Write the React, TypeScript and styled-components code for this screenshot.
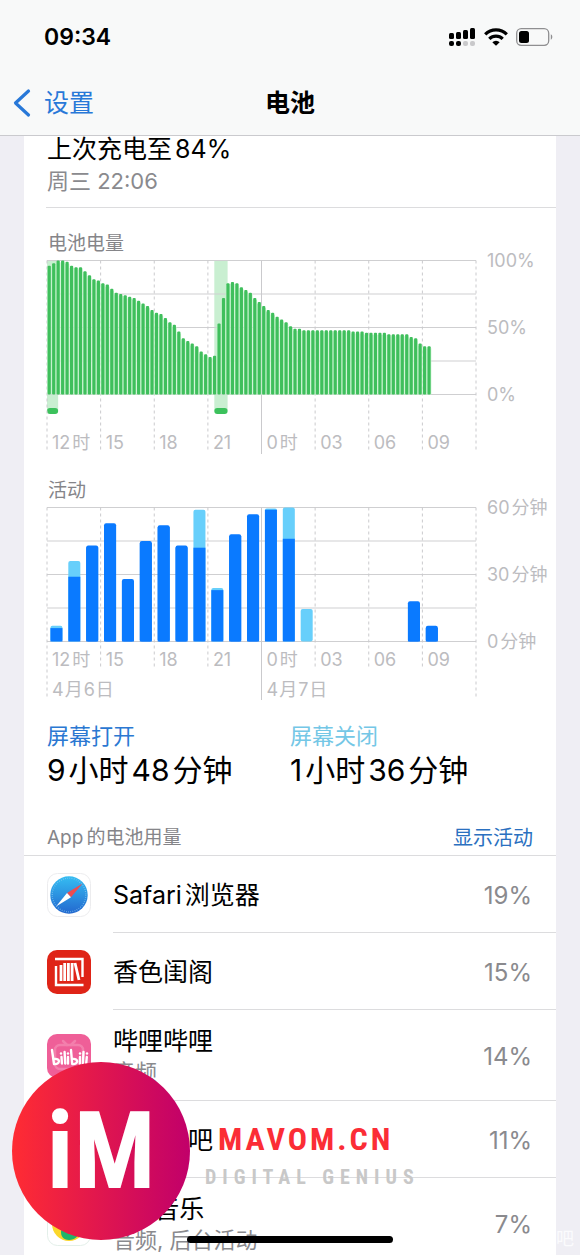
import React from 'react';
import styled, { createGlobalStyle } from 'styled-components';

const latin = `Inter, "Noto Sans CJK SC", sans-serif`;
const brandFace = `"Roboto Condensed", "Noto Sans CJK SC", sans-serif`;

const GlobalStyle = createGlobalStyle`
  * { box-sizing: border-box; }
  body { margin: 0; background: #efeef4; font-family: ${latin}; color: #000; }
  h1, h2, p, ul, dl, dt, dd { margin: 0; padding: 0; font-weight: 400; }
  ul { list-style: none; }
`;

const Screen = styled.div`
  position: relative;
  display: flex;
  flex-direction: column;
  height: 100vh;
  overflow: hidden;
`;

const Header = styled.header`
  background: #f8f9f9;
  border-bottom: 1px solid #cacace;
  flex: none;
`;

const StatusBar = styled.div`
  display: flex;
  align-items: center;
  justify-content: space-between;
  height: 74px;
  padding: 0 27px 0 44px;
`;

const Clock = styled.time`
  font-size: 23px;
  font-weight: 600;
`;

const StatusIcons = styled.div`
  display: flex;
  align-items: center;
  gap: 8px;
`;

const NavBar = styled.nav`
  display: grid;
  grid-template-columns: 1fr auto 1fr;
  align-items: center;
  height: 61px;
  padding: 0 12px 4px;
`;

const BackLink = styled.a`
  display: flex;
  align-items: center;
  gap: 12px;
  color: #2878d8;
  font-size: 25px;
  line-height: 36px;
  text-decoration: none;
`;

const Title = styled.h1`
  font-size: 25px;
  font-weight: 700;
  line-height: 36px;
`;

const Scroller = styled.main`
  flex: 1;
  min-height: 0;
  overflow-y: auto;
  scrollbar-width: none;
  padding: 0 24px;
`;

const Card = styled.div`
  background: #fff;
`;

const LastCharge = styled.section`
  margin-left: 22px;
  padding: 0 0 13px 1px;
  border-bottom: 1px solid #dcdcde;
`;

const ChargeLevel = styled.p`
  font-size: 25px;
  line-height: 26px;
  margin-bottom: 6px;
`;

const ChargeTime = styled.p`
  font-size: 22px;
  line-height: 26px;
  color: #8a8a8e;
`;

const ChartSection = styled.section`
  padding: 24px 80px 0 23px;
`;

const ChartTitle = styled.h2`
  padding-left: 1px;
  font-size: 19px;
  line-height: 24px;
  color: #858589;
`;

const Plot = styled.svg`
  display: block;
  width: 100%;
  overflow: visible;
  font-size: 18px;
  fill: #bcbcc0;
`;

const Totals = styled.dl`
  display: grid;
  grid-template-columns: 1fr 1fr;
  padding: 23px 23px 0;
`;

const TotalLabel = styled.dt<{ $color: string }>`
  font-size: 22px;
  line-height: 26px;
  color: ${(p) => p.$color};
`;

const TotalValue = styled.dd`
  font-size: 30px;
  line-height: 42px;
  white-space: nowrap;
`;

const UsageHeader = styled.div`
  display: flex;
  justify-content: space-between;
  align-items: center;
  padding: 34px 23px 4px;
  border-bottom: 1px solid #dcdcde;
`;

const UsageTitle = styled.h2`
  font-size: 19px;
  line-height: 26px;
  color: #858589;
`;

const ToggleButton = styled.button`
  border: 0;
  padding: 0;
  background: none;
  font: inherit;
  font-size: 20px;
  line-height: 26px;
  color: #2a70c0;
`;

const AppRow = styled.li<{ $tall?: boolean }>`
  display: flex;
  gap: 22px;
  min-height: ${(p) => (p.$tall ? 91 : 77)}px;
  padding-left: 23px;
`;

const AppIcon = styled.svg`
  flex: none;
  align-self: center;
  width: 44px;
  height: 44px;
`;

const AppBody = styled.div`
  flex: 1;
  display: flex;
  align-items: center;
  justify-content: space-between;
  padding: 2px 24px 0 0;
  border-bottom: 1px solid #dcdcde;
`;

const AppName = styled.p`
  font-size: 25px;
  line-height: 34px;
`;

const AppNote = styled.p`
  padding-bottom: 2px;
  font-size: 22px;
  line-height: 28px;
  color: #8a8a8e;
`;

const Percent = styled.span`
  font-size: 24px;
  color: #8a8a8e;
`;

const Gap = styled.span`
  margin-left: 3px;
`;

const HomeIndicator = styled.div`
  position: absolute;
  left: 50%;
  bottom: 12px;
  width: 206px;
  height: 7px;
  margin-left: -103px;
  border-radius: 4px;
  background: #000;
`;

const Brand = styled.aside`
  position: absolute;
  left: 12px;
  bottom: 15px;
  display: flex;
  align-items: center;
  gap: 15px;
  pointer-events: none;
`;

const BrandDisc = styled.div`
  display: flex;
  align-items: center;
  justify-content: center;
  width: 178px;
  height: 178px;
  border-radius: 50%;
  background: linear-gradient(90deg, #ff2c33, #c1006a);
  color: #fff;
  font: 700 108px/108px ${brandFace};
`;

const BrandText = styled.div`
  padding-top: 14px;
`;

const BrandName = styled.p`
  padding-left: 13px;
  font: 700 32px/38px ${brandFace};
  letter-spacing: 3px;
  color: #fb2d36;
`;

const BrandTagline = styled.p`
  font: 700 20px/38px ${brandFace};
  letter-spacing: 6px;
  color: #c8c8c8;
`;

const CornerMark = styled.span`
  position: absolute;
  right: 6px;
  bottom: 4px;
  font-size: 18px;
  line-height: 24px;
  color: #fbfbfd;
`;

/* Splits a label where Latin digits and Han characters meet. */
const runs = (text: string) =>
  text.match(/[\u4e00-\u9fff]+|[^\u4e00-\u9fff]+/g) ?? [];

const Mixed = ({ text }: { text: string }) => (
  <>
    {runs(text).map((run, i) => (i === 0 ? run : <Gap key={i}>{run}</Gap>))}
  </>
);

interface SvgLabelProps {
  x: string;
  y: number;
  dx: number;
  text: string;
  gap?: number;
}

const SvgLabel = ({ x, y, dx, text, gap = 2 }: SvgLabelProps) => (
  <text x={x} y={y} dx={dx}>
    {runs(text).map((run, i) => (
      <tspan key={i} dx={i === 0 ? undefined : gap}>{run}</tspan>
    ))}
  </text>
);

const TOP = 4.5;
const PLOT_HEIGHT = 134;
const BASE = TOP + PLOT_HEIGHT;
const hours = ['12时', '15', '18', '21', '0时', '03', '06', '09'];

interface GridProps {
  labelY: number;
  dashEnd: number;
  edgeEnd: number;
  scale: string[];
}

const Grid = ({ labelY, dashEnd, edgeEnd, scale }: GridProps) => (
  <>
    {[0, 1, 2, 3, 4].map((i) => (
      <line key={i} x1="0" x2="100%" y1={TOP + i * 33.5} y2={TOP + i * 33.5} stroke="#cfcfd1" />
    ))}
    {[0, 1, 2, 3, 4, 5, 6, 7, 8].map((i) => {
      const solid = i === 4;
      const edge = i === 0 || i === 8;
      return (
        <line
          key={i}
          x1={`${i * 12.5}%`}
          x2={`${i * 12.5}%`}
          y1={TOP}
          y2={solid ? edgeEnd + 2 : edge ? edgeEnd : dashEnd}
          stroke="#cacacd"
          strokeDasharray={solid ? undefined : '3 3'}
        />
      );
    })}
    {hours.map((h, i) => (
      <SvgLabel key={h} x={`${i * 12.5}%`} dx={5} y={labelY} text={h} />
    ))}
    {scale.map((s, i) => (
      <SvgLabel key={s} x="100%" dx={11} y={TOP + 6 + i * 67} text={s} />
    ))}
  </>
);

const levels = [
  96, 98, 100, 100, 99, 96, 95, 95, 92, 89, 86, 85, 83, 82, 79, 76, 75, 74, 73, 72,
  70, 68, 66, 63, 61, 60, 57, 54, 52, 47, 42, 40, 38, 36, 32, 30, 28, 29, 53, 72,
  83, 84, 83, 80, 78, 76, 72, 69, 66, 63, 61, 58, 56, 54, 51, 49, 49,
  48, 48, 48, 48, 48, 48, 48, 48, 48, 48, 48, 47, 47, 47, 46, 46, 46, 46, 46,
  45, 45, 45, 45, 45, 43, 42, 38, 36, 36,
];

const LevelChart = () => (
  <Plot height="199" role="img" aria-label="电池电量">
    {[{ x: 0, w: 2.6 }, { x: 39, w: 3.1 }].map((c) => (
      <g key={c.x}>
        <rect x={`${c.x}%`} width={`${c.w}%`} y={TOP} height={150} fill="#c9efd1" />
        <rect x={`${c.x}%`} width={`${c.w}%`} y={152} height={6} rx={3} fill="#3cc15c" />
      </g>
    ))}
    <Grid labelY={193} dashEnd={196} edgeEnd={196} scale={['100%', '50%', '0%']} />
    {levels.map((v, i) => {
      const h = (v / 100) * PLOT_HEIGHT;
      const x = (i * 100) / 96;
      return (
        <g key={i}>
          <rect x={`${x}%`} width={`${100 / 96}%`} y={BASE - h + 2} height={h - 2} fill="#c4f2cc" />
          <rect x={`${x + 0.15}%`} width="0.74%" y={BASE - h} height={h} rx={1} fill="#3fbf5c" />
        </g>
      );
    })}
  </Plot>
);

/* hour slot, minutes with the screen on, total minutes */
const activity: [number, number, number][] = [
  [0, 6, 7], [1, 29, 36], [2, 43, 43], [3, 53, 53], [4, 28, 28], [5, 45, 45],
  [6, 52, 52], [7, 43, 43], [8, 42, 59], [9, 23, 24], [10, 48, 48], [11, 57, 57],
  [12, 59, 59.5], [13, 46, 60], [14, 0, 14.5], [20, 18, 18], [21, 7, 7],
];

const ActivityChart = () => (
  <Plot height="197" role="img" aria-label="活动">
    <Grid labelY={163} dashEnd={165} edgeEnd={195} scale={['60分钟', '30分钟', '0分钟']} />
    <SvgLabel x="0%" dx={5} y={193} gap={1} text="4月6日" />
    <SvgLabel x="50%" dx={5} y={193} gap={1} text="4月7日" />
    {activity.map(([slot, on, total]) => {
      const x = `${(slot * 100) / 24 + 0.8}%`;
      const full = (total / 60) * PLOT_HEIGHT;
      const lit = (on / 60) * PLOT_HEIGHT;
      return (
        <g key={slot}>
          <rect x={x} width="2.8%" y={BASE - full} height={full} rx={2} fill={on === total ? '#0a7aff' : '#67cffb'} />
          {on > 0 && (
            <rect x={x} width="2.8%" y={BASE - lit + (on === total ? 2 : 0)} height={lit - (on === total ? 2 : 0)} fill="#0a7aff" />
          )}
        </g>
      );
    })}
  </Plot>
);

const SafariIcon = () => (
  <AppIcon viewBox="0 0 44 44" aria-hidden="true">
    <defs>
      <linearGradient id="sky" x1="0" y1="0" x2="0" y2="1">
        <stop offset="0" stopColor="#35bdf2" />
        <stop offset="1" stopColor="#2368cf" />
      </linearGradient>
    </defs>
    <rect x=".5" y=".5" width="43" height="43" rx="10" fill="#fff" stroke="#ececee" />
    <circle cx="22" cy="22" r="18.7" fill="url(#sky)" />
    <circle cx="22" cy="22" r="16.8" fill="none" stroke="#8fcdf2" strokeWidth="1.200" strokeDasharray=".6 1.6" />
    <path d="M35.500 10.500 24 24.300 20 20Z" fill="#ee4b4f" />
    <path d="M9 33.500 20 20l4 4.300Z" fill="#fff" />
  </AppIcon>
);

const LibraryIcon = () => (
  <AppIcon viewBox="0 0 44 44" aria-hidden="true">
    <rect width="44" height="44" rx="10" fill="#df2417" />
    <g fill="none" stroke="#fff" strokeWidth="2.400">
      <path d="M8 9h27.500V27M36.500 35H9V16" />
    </g>
    <g stroke="#fff" strokeWidth="2.800">
      <path d="M14 15v16M17.700 13v18M21.400 13v18M25.100 13v18M28 13l4 17" />
    </g>
  </AppIcon>
);

const BilibiliIcon = () => (
  <AppIcon viewBox="0 0 44 44" aria-hidden="true">
    <rect width="44" height="44" rx="10" fill="#ef5f98" />
    <g fill="none" stroke="#f37fac" strokeWidth="2.500" strokeLinecap="round">
      <rect x="8" y="11" width="28" height="24" rx="5" />
      <path d="m16 7 4 4M28 7l-4 4" />
    </g>
    <g fill="none" stroke="#fff" strokeWidth="2.400" strokeLinecap="round" strokeLinejoin="round">
      <path d="m5 16 2 14c6 1 7-6 .2-5M14.500 23l.4 6.500M17.600 18l.6 11.500M21 23v6.500" />
      <path d="m24 16 1.200 14c6 1 7-6 0-5M33 23l-.2 6.500M36.500 18l-.6 11.500M39.800 23l-.6 6.500" />
    </g>
    <g fill="#fff">
      <circle cx="14" cy="19.500" r="1.200" />
      <circle cx="21" cy="19.500" r="1.200" />
      <circle cx="33" cy="19.500" r="1.200" />
      <circle cx="40" cy="19.500" r="1.200" />
    </g>
  </AppIcon>
);

const TiebaIcon = () => (
  <AppIcon viewBox="0 0 44 44" aria-hidden="true">
    <rect width="44" height="44" rx="10" fill="#3d7df6" />
  </AppIcon>
);

const MusicIcon = () => (
  <AppIcon viewBox="0 0 44 44" aria-hidden="true">
    <rect x=".5" y=".5" width="43" height="43" rx="10" fill="#fff" stroke="#e3efe9" />
    <circle cx="22" cy="22" r="17" fill="#fbd72b" />
    <path d="M14 30c0-7 14-8 17 0 1 4-3 8-9 8s-8-4-8-8Z" fill="#1fb56a" />
  </AppIcon>
);

const apps = [
  { name: 'Safari浏览器', share: '19%', Icon: SafariIcon },
  { name: '香色闺阁', share: '15%', Icon: LibraryIcon },
  { name: '哔哩哔哩', note: '音频', share: '14%', Icon: BilibiliIcon },
  { name: '百度贴吧', share: '11%', Icon: TiebaIcon },
  { name: 'QQ音乐', note: '音频, 后台活动', share: '7%', Icon: MusicIcon },
];

const SignalIcon = () => (
  <svg width="27" height="20" viewBox="0 0 27 20" aria-hidden="true">
    <rect x="0" y="6" width="5" height="6" rx="1.500" />
    <rect x="7" y="5" width="5" height="7" rx="1.500" />
    <rect x="14" y="3" width="5" height="9" rx="1.500" />
    <rect x="21" y="1" width="5" height="11" rx="1.500" />
    <rect x="0" y="14" width="5" height="5" rx="2" />
    <rect x="7" y="14" width="5" height="5" rx="2" />
    <rect x="14" y="14" width="5" height="5" rx="2" fill="#c9c9cb" />
    <rect x="21" y="14" width="5" height="5" rx="2" fill="#c9c9cb" />
  </svg>
);

const WifiIcon = () => (
  <svg width="24" height="20" viewBox="0 0 24 20" aria-hidden="true">
    <g fill="none" stroke="#000" strokeWidth="3.200">
      <path d="M1.200 7.300a15.300 15.300 0 0 1 21.600 0" />
      <path d="M5.300 11.800a9.500 9.500 0 0 1 13.400 0" />
    </g>
    <path d="M8.300 15.200a5.300 5.300 0 0 1 7.400 0L12 18.800Z" />
  </svg>
);

const BatteryIcon = () => (
  <svg width="37" height="18" viewBox="0 0 37 18" aria-hidden="true">
    <rect x=".7" y=".7" width="32" height="16.600" rx="4.500" fill="none" stroke="#8f8f91" strokeWidth="1.300" />
    <rect x="3" y="3" width="10" height="12" rx="2.500" />
    <path d="M34.800 6.300c2 .8 2 4.600 0 5.400Z" fill="#8f8f91" />
  </svg>
);

export default function App() {
  return (
    <>
      <GlobalStyle />
      <Screen>
        <Header>
          <StatusBar>
            <Clock>09:34</Clock>
            <StatusIcons>
              <SignalIcon />
              <WifiIcon />
              <BatteryIcon />
            </StatusIcons>
          </StatusBar>
          <NavBar>
            <BackLink href="#settings">
              <svg width="20" height="30" viewBox="0 0 20 30" aria-hidden="true">
                <path d="M16.500 3 3.500 15l13 12" fill="none" stroke="#2878d8" strokeWidth="3.200" strokeLinecap="round" strokeLinejoin="round" />
              </svg>
              设置
            </BackLink>
            <Title>电池</Title>
          </NavBar>
        </Header>

        <Scroller>
          <Card>
            <LastCharge>
              <ChargeLevel><Mixed text="上次充电至84%" /></ChargeLevel>
              <ChargeTime>周三 22:06</ChargeTime>
            </LastCharge>

            <ChartSection>
              <ChartTitle>电池电量</ChartTitle>
              <LevelChart />
            </ChartSection>
            <ChartSection>
              <ChartTitle>活动</ChartTitle>
              <ActivityChart />
            </ChartSection>

            <Totals>
              <div>
                <TotalLabel $color="#2b78d2">屏幕打开</TotalLabel>
                <TotalValue><Mixed text="9小时48分钟" /></TotalValue>
              </div>
              <div>
                <TotalLabel $color="#74c7e6">屏幕关闭</TotalLabel>
                <TotalValue><Mixed text="1小时36分钟" /></TotalValue>
              </div>
            </Totals>

            <UsageHeader>
              <UsageTitle><Mixed text="App的电池用量" /></UsageTitle>
              <ToggleButton type="button">显示活动</ToggleButton>
            </UsageHeader>
            <ul>
              {apps.map(({ name, note, share, Icon }) => (
                <AppRow key={name} $tall={Boolean(note)}>
                  <Icon />
                  <AppBody>
                    <div>
                      <AppName><Mixed text={name} /></AppName>
                      {note && <AppNote>{note}</AppNote>}
                    </div>
                    <Percent>{share}</Percent>
                  </AppBody>
                </AppRow>
              ))}
            </ul>
          </Card>
        </Scroller>

        <CornerMark>吧</CornerMark>
        <HomeIndicator />
        <Brand>
          <BrandDisc>iM</BrandDisc>
          <BrandText>
            <BrandName>MAVOM.CN</BrandName>
            <BrandTagline>DIGITAL GENIUS</BrandTagline>
          </BrandText>
        </Brand>
      </Screen>
    </>
  );
}
